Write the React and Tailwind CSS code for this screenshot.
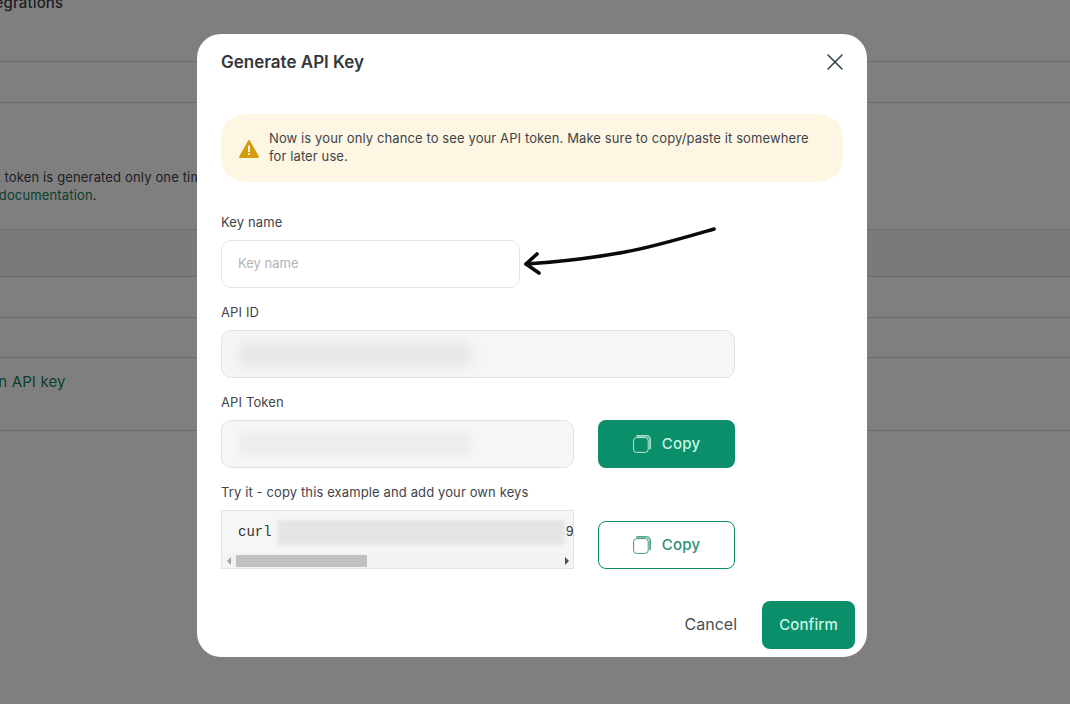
import { X } from "lucide-react";

const sans = "font-['Inter','Noto_Sans',sans-serif]";

// Two stacked rounded squares, thin stroke like the reference
function CopyIcon({ className }) {
  return (
    <svg viewBox="0 0 18 18" fill="none" stroke="currentColor" strokeWidth="0.9" className={className}>
      <rect x="0.6" y="2.6" width="14.6" height="14.8" rx="3" />
      <path d="M3.4 0.6h10.4a3.4 3.4 0 0 1 3.6 3.4v10" />
      <path d="M3.4 1.6h10.2a2.8 2.8 0 0 1 2.8 2.8v10" opacity="0.7" />
    </svg>
  );
}

function WarningIcon({ className }) {
  return (
    <svg viewBox="0 0 20 19" className={className}>
      <path d="M10 1L19.4 17.6a0.6 0.6 0 0 1-0.5 0.9H1.1a0.6 0.6 0 0 1-0.5-0.9z" fill="#d49b0e" stroke="#d49b0e" strokeLinejoin="round" />
      <rect x="9" y="6.5" width="2" height="6.5" rx="0.6" fill="#fdf6e3" />
      <rect x="9" y="14" width="2" height="2" rx="0.6" fill="#fdf6e3" />
    </svg>
  );
}

// Page that sits dimmed behind the dialog
function BackgroundPage() {
  return (
    <div className="text-[13px] tracking-[0.15px] text-[#3c4043]">
      <div className="flow-root h-[62px] border-b border-[#d8d8d8]">
        <p className="-ml-[24px] -mt-[6px] text-[15px] font-medium leading-[18px]">Integrations</p>
      </div>
      <div className="h-[41px] border-b border-[#d8d8d8]" />
      <div className="h-[127px] border-b border-[#d8d8d8] pt-[65px] leading-[18px]">
        <p className="-ml-[26px] whitespace-nowrap">Test token is generated only one time and can not be recovered.</p>
        <p className="-ml-[29px]">
          See <span className="text-[#15805f]">documentation</span>.
        </p>
      </div>
      <div className="h-[47px] border-b border-[#d8d8d8] bg-[#f5f5f5]" />
      <div className="h-[41px] border-b border-[#d8d8d8]" />
      <div className="h-[40px] border-b border-[#d8d8d8]" />
      <div className="h-[73px] border-b border-[#d8d8d8] pt-[14px]">
        <p className="-ml-[81px] whitespace-nowrap text-[15px] leading-[20px] text-[#15805f]">Generate an API key</p>
      </div>
    </div>
  );
}

function Label({ children }) {
  return <p className="text-[13px] font-normal leading-[18px] tracking-[0.12px] text-[#3f4448]">{children}</p>;
}

function ReadonlyField({ width, blur }) {
  return (
    <div className={`${width} flex h-12 items-center rounded-[10px] border border-[#e3e3e3] bg-[#f6f6f6] pl-[17px]`}>
      <div className={`${blur} h-[24px] w-[232px] rounded`} />
    </div>
  );
}

export default function App() {
  return (
    <div className={`relative h-[704px] w-[1070px] overflow-hidden bg-white ${sans}`}>
      <BackgroundPage />

      {/* overlay and dialog */}
      <div className="absolute inset-0 bg-black/50 pl-[197px] pt-[34px]">
        <div className="h-[623px] w-[670px] rounded-[24px] bg-white pl-6 pr-6 pt-[16px]">
          <div className="flex h-[24px] items-center justify-between">
            <h2 className="text-[17px] font-semibold leading-6 text-[#33373a]">Generate API Key</h2>
            <X className="-mr-[6px] h-7 w-7 text-[#33474d]" strokeWidth={1.4} />
          </div>

          <div className="mt-[40px] flex h-[68px] items-center gap-[10px] rounded-[24px] bg-[#fdf6e3] pl-[18px] pr-6">
            <WarningIcon className="h-[19px] w-5 shrink-0" />
            <p className="pb-[2px] text-[13px] leading-[18px] tracking-[0.11px] text-[#3f4448]">
              Now is your only chance to see your API token. Make sure to copy/paste it somewhere for later use.
            </p>
          </div>

          <div className="mt-[31px]">
            <Label>Key name</Label>
            <div className="relative mt-[9px]">
              <input
                placeholder="Key name"
                className="h-12 w-[299px] rounded-[10px] border border-[#e3e3e3] bg-white pb-[2px] pl-[16px] text-[13px] outline-none placeholder:text-[#b4b4b4]"
              />
              {/* hand drawn arrow on top of the screenshot */}
              <svg
                viewBox="0 0 200 54"
                fill="none"
                stroke="#0a0a0a"
                strokeLinecap="round"
                strokeLinejoin="round"
                strokeWidth="3.6"
                className="absolute left-[302px] top-[-16px] h-[54px] w-[200px]"
              >
                <path d="M191 5C160 14 130 23 102 28C75 33 50 37 3 40" />
                <path d="M14 30L3 40L16 49" />
              </svg>
            </div>
          </div>

          <div className="mt-[15px]">
            <Label>API ID</Label>
            <div className="mt-[9px]">
              <ReadonlyField width="w-[514px]" blur="bg-[#e6e6e6] blur-[6px]" />
            </div>
          </div>

          <div className="mt-[15px]">
            <Label>API Token</Label>
            <div className="mt-[9px] flex gap-6">
              <ReadonlyField width="w-[353px]" blur="bg-[#eeeeee] blur-[2px]" />
              <button className="flex h-12 w-[137px] items-center justify-center gap-[11px] rounded-lg bg-[#0b8f6a] text-[15px] font-medium tracking-[0.2px] text-[#c8f5e4]">
                <CopyIcon className="h-[18px] w-[18px]" />
                Copy
              </button>
            </div>
          </div>

          <div className="mt-[15px]">
            <Label>Try it - copy this example and add your own keys</Label>
            <div className="mt-[9px] flex items-end gap-6">
              <div className="h-[59px] w-[353px] overflow-hidden border border-[#e3e3e3] bg-[#f6f6f6]">
                <div className="flex h-[42px] items-center whitespace-nowrap pl-[16px] font-['Liberation_Mono',monospace] text-[14px] text-[#33373a]">
                  <span>curl</span>
                  <div className="ml-[6px] h-[25px] w-[287px] shrink-0 bg-[#e4e4e4] blur-[2px]" />
                  <span className="ml-px">9</span>
                </div>
                <div className="flex h-[15px] items-center bg-[#f3f3f3] pl-[5px] pr-[4px]">
                  <span className="h-0 w-0 border-y-[4px] border-r-[4px] border-y-transparent border-r-[#a3a3a3]" />
                  <span className="ml-[5px] h-[12px] w-[131px] bg-[#c1c1c1]" />
                  <span className="ml-auto h-0 w-0 border-y-[4px] border-l-[4px] border-y-transparent border-l-[#505050]" />
                </div>
              </div>
              <button className="flex h-12 w-[137px] items-center justify-center gap-[11px] rounded-lg border border-[#0b8f6a] bg-white text-[15px] font-medium tracking-[0.2px] text-[#2f8f72]">
                <CopyIcon className="h-[18px] w-[18px]" />
                Copy
              </button>
            </div>
          </div>

          <div className="-mr-[12px] mt-[32px] flex items-center justify-end gap-[25px]">
            <button className="pb-[2px] text-[16px] text-[#4a4f52]">Cancel</button>
            <button className="h-12 w-[93px] rounded-lg bg-[#0b8f6a] text-[15px] font-medium tracking-[0.1px] text-[#c8f5e4]">Confirm</button>
          </div>
        </div>
      </div>
    </div>
  );
}
